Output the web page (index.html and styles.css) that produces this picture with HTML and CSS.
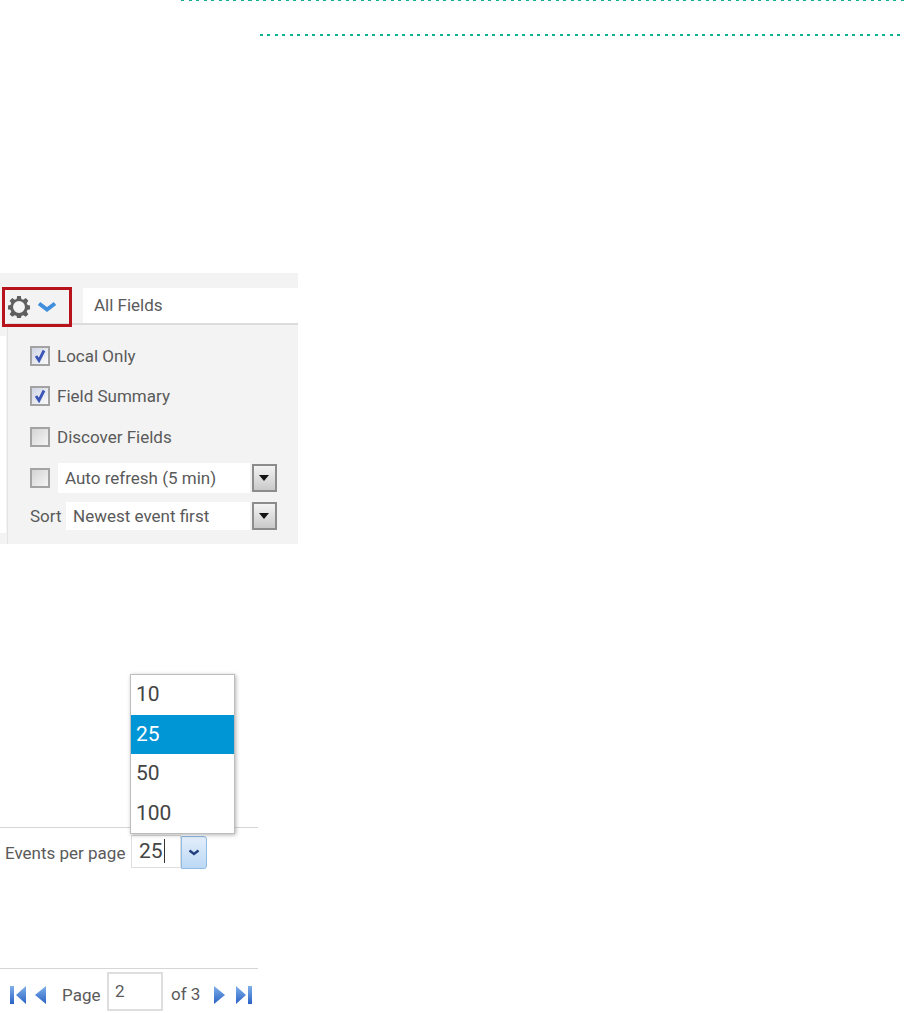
FILE: index.html
```html
<!DOCTYPE html>
<html lang="en">
<head>
	<meta charset="UTF-8">
	<title>Event viewer options</title>
	<link rel="stylesheet" href="styles.css">
</head>
<body>
	<div class="rule rule-a"></div>
	<div class="rule rule-b"></div>

	<!-- options panel -->
	<div class="panel">
		<div class="topbar">
			<div class="gearbox">
				<svg class="gear" width="22" height="22" viewBox="0 0 24 24">
					<path fill="#5f5f5f" fill-rule="evenodd" d="M10 0h4l.6 3.200 2.100.9 2.700-1.800 2.800 2.800-1.800 2.700.9 2.100 3.200.6v4l-3.200.6-.9 2.100 1.800 2.700-2.800 2.800-2.700-1.800-2.100.9-.6 3.200h-4l-.6-3.200-2.100-.9-2.700 1.800-2.800-2.800 1.800-2.700-.9-2.100-3.200-.6v-4l3.200-.6.9-2.100-1.800-2.700 2.800-2.800 2.700 1.800 2.100-.9zM12 5.500a6.500 6.500 0 1 0 0 13a6.500 6.500 0 0 0 0-13z"/>
				</svg>
				<svg class="chev" width="20" height="12" viewBox="0 0 20 12">
					<path d="M2 2.500l8 6 8-6" fill="none" stroke="#3f8fdc" stroke-width="4"/>
				</svg>
			</div>
			<div class="fieldbox">All Fields</div>
		</div>
		<div class="menu">
			<div class="row row1"><span class="cb on"><svg width="14" height="14" viewBox="0 0 14 14"><path d="M3 7l3 4.500 5-10" fill="none" stroke="#3b55b5" stroke-width="2.800"/></svg></span><span class="lbl">Local Only</span></div>
			<div class="row row2"><span class="cb on"><svg width="14" height="14" viewBox="0 0 14 14"><path d="M3 7l3 4.500 5-10" fill="none" stroke="#3b55b5" stroke-width="2.800"/></svg></span><span class="lbl">Field Summary</span></div>
			<div class="row row3"><span class="cb"></span><span class="lbl">Discover Fields</span></div>
			<div class="row row4">
				<span class="cb"></span>
				<span class="sel sel-auto">Auto refresh (5 min)</span>
				<span class="arrowbtn"></span>
			</div>
			<div class="row row5">
				<span class="sortlbl">Sort</span>
				<span class="sel sel-sort">Newest event first</span>
				<span class="arrowbtn"></span>
			</div>
		</div>
	</div>

	<!-- events per page -->
	<div class="perpage">
		<ul class="droplist">
			<li>10</li>
			<li class="current">25</li>
			<li>50</li>
			<li>100</li>
		</ul>
		<span class="pp-label">Events per page</span>
		<span class="pp-input"><span class="caret">25</span></span>
		<span class="pp-btn">
			<svg width="12" height="8" viewBox="0 0 12 8"><path d="M1.500 1.500l4.500 3.500 4.500-3.500" fill="none" stroke="#23407e" stroke-width="2.400"/></svg>
		</span>
	</div>

	<!-- pager -->
	<div class="pager">
		<svg class="ic-first" width="16" height="18" viewBox="0 0 16 18"><defs><linearGradient id="pg" x1="0" y1="0" x2="0" y2="1"><stop offset="0" stop-color="#7fb0ea"/><stop offset="1" stop-color="#2a62c4"/></linearGradient></defs><path fill="url(#pg)" d="M0 0h4v18h-4zM16 0v18l-10-9z"/></svg>
		<svg class="ic-prev" width="11" height="18" viewBox="0 0 11 18"><path fill="url(#pg)" d="M11 0v18l-11-9z"/></svg>
		<span class="pg-word">Page</span>
		<span class="pg-input">2</span>
		<span class="pg-of">of 3</span>
		<svg class="ic-next" width="11" height="18" viewBox="0 0 11 18"><path fill="url(#pg)" d="M0 0v18l11-9z"/></svg>
		<svg class="ic-last" width="16" height="18" viewBox="0 0 16 18"><path fill="url(#pg)" d="M12 0h4v18h-4zM0 0v18l10-9z"/></svg>
	</div>
</body>
</html>
```

FILE: styles.css
```css
*{padding:0;margin:0;box-sizing:border-box;}
ul,li{list-style:none;}
body{width:904px;height:1013px;overflow:hidden;background:#fff;font-family:"Roboto","Noto Sans",sans-serif;color:#5a5a5a;}

/* dotted green lines */
.rule{background:repeating-linear-gradient(90deg,#12b08e 0,#12b08e 3px,transparent 3px,transparent 7.500px);}
.rule-a{margin-left:181px;height:1px;}
.rule-b{margin-left:260px;margin-top:33px;height:2px;}

.panel{margin-top:237px;width:298px;height:271px;background:#f3f3f3;position:relative;}
/* white strip left of the menu */
.panel:before{content:"";position:absolute;left:0;top:63px;width:6px;height:197px;background:#fff;}
.topbar{height:50px;padding-top:14px;display:flex;align-items:flex-start;}
.gearbox{width:70px;height:40px;margin-left:2px;border:3px solid #b8121d;display:flex;align-items:center;padding-left:3px;gap:7px;position:relative;z-index:2;}
.fieldbox{margin-left:11px;width:215px;height:36px;margin-top:1px;background:#fff;font-size:17px;line-height:34px;padding-left:11px;}

.menu{margin-left:7px;height:221px;border-top:2px solid #dcdcdc;border-left:1px solid #e4e4e4;position:relative;}
.row{display:flex;align-items:center;padding-left:22px;}
.row1{margin-top:21px;height:20px;}
.row2{margin-top:20px;height:20px;}
.row3{margin-top:21px;height:20px;}
.row4{margin-top:16px;height:30px;}
.row5{margin-top:9px;height:28px;}
.cb{width:20px;height:20px;border:2px solid #a3a3a3;background:linear-gradient(135deg,#d4d4d4,#f5f5f5);display:flex;align-items:center;justify-content:center;flex:none;}
.cb.on{background:linear-gradient(135deg,#d0d4e4,#fbfbfb);}
.lbl{margin-left:7px;font-size:17px;white-space:nowrap;}
.sel{background:#fff;font-size:17px;height:100%;display:flex;align-items:center;white-space:nowrap;}
.sel-auto{margin-left:8px;width:192px;padding-left:7px;}
.sel-sort{margin-left:4px;width:184px;padding-left:7px;}
.sortlbl{font-size:17px;width:32px;}
.arrowbtn{margin-left:2px;width:25px;height:28px;border:2px solid #8c8c8c;background:linear-gradient(#f3f3f3,#c9c9c9);position:relative;flex:none;}
.arrowbtn:after{content:"";position:absolute;left:5px;top:9px;border:5px solid transparent;border-top:6px solid #111;border-bottom:0;}

.perpage{margin-top:283px;width:258px;height:43px;border-top:1px solid #d6d6d6;display:flex;align-items:flex-start;position:relative;}
.pp-label{margin-left:5px;margin-top:14px;font-size:17px;line-height:22px;width:126px;white-space:nowrap;}
.pp-input{width:50px;height:33px;margin-top:7px;border:1px solid #dedede;font-size:21px;line-height:31px;padding-left:7px;color:#444;}
.caret{display:inline-block;border-right:1px solid #333;line-height:24px;padding-right:1px;}
.pp-btn{width:26px;height:33px;margin-top:8px;border:1px solid #90bbe4;border-radius:0 3px 3px 0;background:linear-gradient(#e3eefb,#bcd8f5);display:flex;align-items:center;justify-content:center;}
.droplist{position:absolute;left:130px;bottom:36px;width:105px;height:160px;background:#fff;border:1px solid #bdbdbd;box-shadow:1px 1px 4px rgba(0,0,0,.3);}
.droplist li{height:39.500px;line-height:39px;font-size:21px;padding-left:5px;color:#444;}
.droplist li.current{background:#0096d6;color:#fff;}

.pager{margin-top:98px;width:258px;height:46px;border-top:1px solid #d6d6d6;display:flex;align-items:flex-start;padding-left:10px;}
.pager svg{margin-top:17px;flex:none;}
.ic-prev{margin-left:9px;}
.pg-word{margin-left:16px;margin-top:15px;font-size:17px;line-height:22px;width:45px;}
.pg-input{width:56px;height:39px;margin-top:3px;border:2px solid #dedede;font-size:17px;line-height:35px;padding-left:6px;}
.pg-of{margin-left:8px;margin-top:14px;font-size:17px;line-height:22px;width:43px;white-space:nowrap;}
.ic-last{margin-left:11px;}
```
